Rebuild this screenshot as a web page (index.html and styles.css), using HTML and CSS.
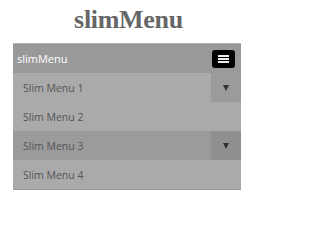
FILE: index.html
```html
<!DOCTYPE html>
<html>
<head>
<meta charset="utf-8">
<link rel="stylesheet" href="styles.css">
</head>
<body>
<div class="page">
  <h1 class="title">slimMenu</h1>
  <nav class="menu">
    <div class="menu-head">
      <span class="brand">slimMenu</span>
      <span class="toggle"><span class="bar"></span><span class="bar"></span><span class="bar"></span></span>
    </div>
    <ul class="items">
      <li class="item"><span class="label">Slim Menu 1</span><span class="caret"><span class="tri"></span></span></li>
      <li class="item"><span class="label">Slim Menu 2</span></li>
      <li class="item item-dark"><span class="label">Slim Menu 3</span><span class="caret"><span class="tri"></span></span></li>
      <li class="item"><span class="label">Slim Menu 4</span></li>
    </ul>
  </nav>
</div>
</body>
</html>
```
FILE: styles.css
```css
html, body {
  margin: 0;
  padding: 0;
  background: #fff;
}
.page {
  width: 251px;
  padding-left: 13px;
  box-sizing: border-box;
}
.title {
  margin: 0;
  width: 228px;
  height: 43px;
  padding: 6px 0 0 3px;
  box-sizing: border-box;
  text-align: center;
  font-family: "Liberation Serif", serif;
  font-weight: bold;
  font-size: 26px;
  line-height: 28px;
  letter-spacing: -0.3px;
  color: #666;
}
.menu {
  width: 228px;
  font-family: "Open Sans", sans-serif;
}
.menu-head {
  height: 30px;
  box-sizing: border-box;
  background: #999;
  border-top: 1px solid #b3b3b3;
  display: flex;
  align-items: center;
  justify-content: space-between;
  padding: 0 6px 0 4px;
}
.brand {
  color: #fff;
  font-size: 11px;
}
.toggle {
  width: 23px;
  height: 18px;
  background: #000;
  border-radius: 3px;
  display: flex;
  flex-direction: column;
  justify-content: center;
  align-items: center;
  gap: 1px;
}
.bar {
  width: 11px;
  height: 2px;
  background: #eee;
}
.items {
  list-style: none;
  margin: 0;
  padding: 0;
  border-bottom: 1px solid #9a9a9a;
}
.item {
  display: flex;
  height: 29px;
  background: #aaa;
  color: #555;
  font-size: 10.5px;
}
.label {
  flex: 1;
  display: flex;
  align-items: center;
  padding-left: 10px;
}
.caret {
  width: 30px;
  display: flex;
  align-items: center;
  justify-content: center;
  background: #9b9b9b;
}
.tri {
  width: 0;
  height: 0;
  border-left: 3.5px solid transparent;
  border-right: 3.5px solid transparent;
  border-top: 6px solid #333;
}
.item-dark {
  background: #9b9b9b;
}
.item-dark .caret {
  background: #8f8f8f;
}
```
